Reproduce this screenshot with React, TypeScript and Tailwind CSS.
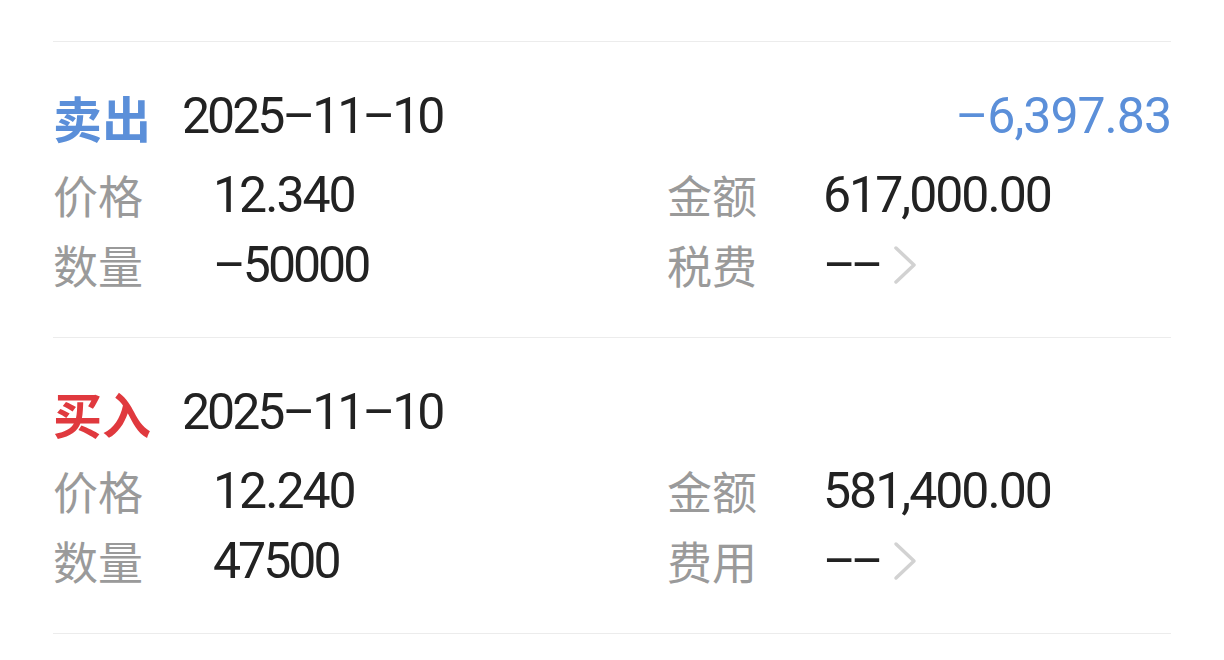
import React from "react";

const num = "font-['Roboto','Liberation_Sans',sans-serif]";
const cjk = "font-['Noto_Sans_CJK_SC','Noto_Sans',sans-serif]";

function Chevron() {
  return (
    <svg width="24" height="40" viewBox="0 0 24 40" className="ml-[14px]">
      <polyline points="3,3 21,20 3,37" fill="none" stroke="#d2d2d2" strokeWidth="3.5" strokeLinecap="round" strokeLinejoin="round" />
    </svg>
  );
}

function Field({
  label,
  value,
  chevron,
  lw,
  track,
}: {
  label: string;
  value: string;
  chevron?: boolean;
  lw: string;
  track: string;
}) {
  return (
    <div className="flex items-center h-[70px]">
      <div className={`${lw} ${cjk} text-[45px] leading-none text-[#9a9a9a] -mt-[3px]`}>{label}</div>
      <div className={`${num} text-[50px] leading-none text-[#222222] flex items-center -mt-[2px]`}>
        <span className={track}>{value}</span>
        {chevron && <Chevron />}
      </div>
    </div>
  );
}

function Card({
  kind,
  color,
  date,
  pnl,
  price,
  qty,
  amount,
  feeLabel,
}: {
  kind: string;
  color: string;
  date: string;
  pnl?: string;
  price: string;
  qty: string;
  amount: string;
  feeLabel: string;
}) {
  return (
    <div className="border-b border-[#ececec] pt-[46px] pb-[36px]">
      <div className="flex items-center h-[56px] mb-[17px]">
        <div className={`${cjk} text-[49px] font-bold leading-none ${color}`}>{kind}</div>
        <div className={`${num} ml-[31px] text-[50px] leading-none tracking-[-3px] text-[#222222]`}>{date}</div>
        {pnl && (
          <div className={`${num} ml-auto text-[50px] leading-none tracking-[-1px] text-[#5b8fd9]`}>{pnl}</div>
        )}
      </div>
      <div className="grid grid-cols-[614px_1fr]">
        <Field lw="w-[160px]" track="tracking-[-2px]" label="价格" value={price} />
        <Field lw="w-[156px]" track="tracking-[-2px]" label="金额" value={amount} />
        <Field lw="w-[160px]" track="tracking-[-3px]" label="数量" value={qty} />
        <Field lw="w-[156px]" track="tracking-[-5px]" label={feeLabel} value="––" chevron />
      </div>
    </div>
  );
}

export default function App() {
  return (
    <div className="w-[1224px] h-[660px] bg-white overflow-hidden">
      <div className="mx-[53px] mt-[41px] border-t border-[#ececec]">
        <Card
          kind="卖出"
          color="text-[#5b8fd9]"
          date="2025–11–10"
          pnl="–6,397.83"
          price="12.340"
          qty="–50000"
          amount="617,000.00"
          feeLabel="税费"
        />
        <Card
          kind="买入"
          color="text-[#e0393e]"
          date="2025–11–10"
          price="12.240"
          qty="47500"
          amount="581,400.00"
          feeLabel="费用"
        />
      </div>
    </div>
  );
}
